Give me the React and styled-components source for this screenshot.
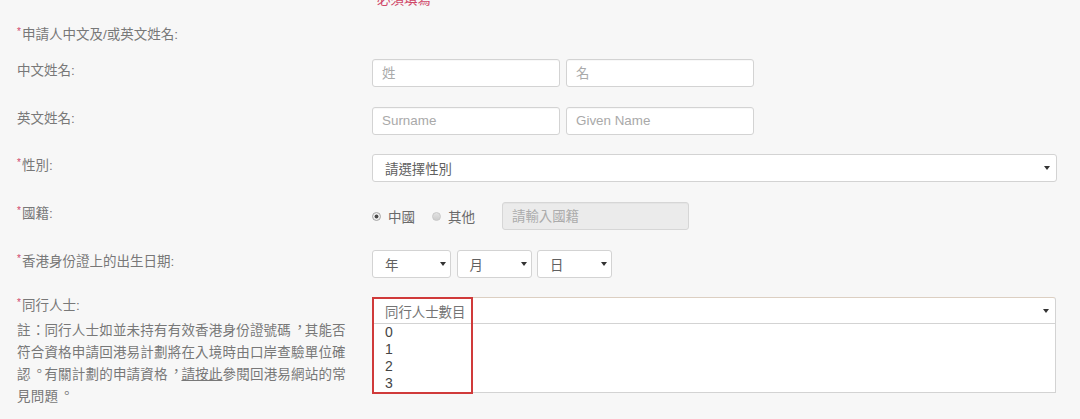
import React from 'react';
import styled, { createGlobalStyle } from 'styled-components';

const FONT = '"Liberation Sans", "Noto Sans CJK TC", sans-serif';
const CJK = '"Noto Sans CJK TC", "Noto Sans CJK JP", sans-serif';

const Global = createGlobalStyle`
  html, body { margin: 0; padding: 0; background: #f7f7f7; }
  body { font-family: ${FONT}; overflow: hidden; }
  * { box-sizing: border-box; }
`;

const Page = styled.div`
  width: 1080px;
  height: 419px;
  overflow: hidden;
  background: #f7f7f7;
  padding-left: 17px;
`;

const Form = styled.div`
  margin-top: -10px;
  display: flex;
  flex-direction: column;
`;

const Row = styled.div`
  display: grid;
  grid-template-columns: 355px 685px;
  align-items: start;
  height: ${(p) => (p.$h ? `${p.$h}px` : 'auto')};
`;

const Label = styled.div`
  font-size: 13.5px;
  line-height: 20px;
  color: #787878;
  padding-top: ${(p) => p.$pt ?? 2}px;
  margin-top: ${(p) => p.$mt ?? 0}px;
`;

const Req = styled.span`
  color: #d0456a;
  font-size: 10px;
  line-height: 14px;
  vertical-align: top;
  margin-right: 1px;
`;

const RequiredNote = styled.div`
  font-size: 13.5px;
  line-height: 20px;
  color: #cf4668;
`;

const Pair = styled.div`
  display: flex;
  gap: 6px;
`;

const TextInput = styled.input`
  width: ${(p) => p.$w ?? 188}px;
  height: 28px;
  border: 1px solid #d3d3d3;
  border-radius: 3px;
  background: #fff;
  padding: 0 9px;
  font: 13.4px ${FONT};
  color: #555;
  outline: none;
  box-shadow: inset 0 1px 1px rgba(0, 0, 0, 0.03);
  &::placeholder {
    color: #a9a9a9;
  }
  &:disabled {
    background: #ebebeb;
    border-color: #d6d6d6;
  }
  &:disabled::placeholder {
    color: #ababab;
  }
`;

const Select = styled.div`
  width: ${(p) => p.$w}px;
  height: 28px;
  border: 1px solid #d3d3d3;
  border-radius: 3px;
  background: #fff;
  display: flex;
  align-items: center;
  justify-content: space-between;
  padding: 0 ${(p) => p.$pr ?? 6}px 0 12px;
  font-size: 13.4px;
  color: #606060;
`;

const Arrow = () => (
  <svg width="6" height="4" viewBox="0 0 6 4" aria-hidden="true">
    <path d="M0 0H6L3 4Z" fill="#333" />
  </svg>
);

const DateGroup = styled.div`
  display: flex;
  gap: 5.5px;
`;

const RadioGroup = styled.div`
  display: flex;
  align-items: center;
  height: 28px;
`;

const RadioItem = styled.label`
  display: flex;
  align-items: center;
  gap: 7px;
  font-size: 13.5px;
  color: #6a6a6a;
  margin-right: ${(p) => p.$mr}px;
`;

const RadioDot = styled.span`
  width: 9px;
  height: 9px;
  border-radius: 50%;
  border: 1px solid ${(p) => (p.$checked ? '#a5a5a5' : '#c8c8c8')};
  background: ${(p) =>
    p.$checked
      ? 'radial-gradient(circle, #4a4a4a 0 1.6px, #efefef 2.3px)'
      : 'linear-gradient(#e2e2e2, #cdcdcd)'};
`;

const Combo = styled.div`
  position: relative;
  width: 684px;
`;

const ComboHead = styled.div`
  height: 27px;
  border: 1px solid #d3d3d3;
  border-top-color: #dccfc2;
  border-radius: 3px 3px 0 0;
  background: #fff;
  display: flex;
  align-items: center;
  justify-content: space-between;
  padding: 0 6px 0 12px;
  font-size: 13.4px;
  color: #747474;
`;

const ComboList = styled.ul`
  list-style: none;
  margin: 0;
  padding: 0;
  border: 1px solid #d3d3d3;
  border-top: none;
  background: #fff;
`;

const Option = styled.li`
  height: 16.8px;
  line-height: 16.8px;
  padding-left: 12px;
  font-size: 14px;
  color: #444;
`;

const Highlight = styled.div`
  position: absolute;
  left: 0;
  top: 0;
  width: 101px;
  height: 96.5px;
  border: 2px solid #d03a3a;
  pointer-events: none;
`;

const LeftCol = styled.div`
  display: flex;
  flex-direction: column;
`;

const Note = styled.p`
  margin: 1.5px 0 0;
  width: 336px;
  font-family: ${CJK};
  font-size: 13.5px;
  letter-spacing: 0.2px;
  line-height: 22px;
  color: #787878;
`;

/* Traditional-Chinese style punctuation: centred in its cell */
const Punct = styled.span`
  display: inline-block;
  transform: translate(${(p) => p.$dx ?? 0.14}em, ${(p) => p.$dy ?? -0.22}em);
`;

const NoteLink = styled.a`
  color: inherit;
  text-decoration: underline;
`;

export default function App() {
  return (
    <>
      <Global />
      <Page lang="zh-Hant-TW">
        <Form>
          <Row $h={35}>
            <div />
            <RequiredNote>
              <Req>*</Req>必須填寫
            </RequiredNote>
          </Row>
          <Row $h={34}>
            <Label $pt={0}>
              <Req>*</Req>申請人中文及/或英文姓名:
            </Label>
          </Row>
          <Row $h={47.7}>
            <Label>中文姓名:</Label>
            <Pair>
              <TextInput placeholder="姓" readOnly />
              <TextInput placeholder="名" readOnly />
            </Pair>
          </Row>
          <Row $h={47.7}>
            <Label>英文姓名:</Label>
            <Pair>
              <TextInput placeholder="Surname" readOnly />
              <TextInput placeholder="Given Name" readOnly />
            </Pair>
          </Row>
          <Row $h={47.7}>
            <Label>
              <Req>*</Req>性別:
            </Label>
            <Select $w={685}>
              <span>請選擇性別</span>
              <Arrow />
            </Select>
          </Row>
          <Row $h={47.7}>
            <Label>
              <Req>*</Req>國籍:
            </Label>
            <RadioGroup>
              <RadioItem $mr={17}>
                <RadioDot $checked />
                中國
              </RadioItem>
              <RadioItem $mr={27}>
                <RadioDot />
                其他
              </RadioItem>
              <TextInput $w={187} placeholder="請輸入國籍" disabled />
            </RadioGroup>
          </Row>
          <Row $h={47.7}>
            <Label>
              <Req>*</Req>香港身份證上的出生日期:
            </Label>
            <DateGroup>
              <Select $w={79} $pr={4}>
                <span>年</span>
                <Arrow />
              </Select>
              <Select $w={75} $pr={4}>
                <span>月</span>
                <Arrow />
              </Select>
              <Select $w={75} $pr={4}>
                <span>日</span>
                <Arrow />
              </Select>
            </DateGroup>
          </Row>
          <Row>
            <LeftCol>
              <Label $pt={0} $mt={-1}>
                <Req>*</Req>同行人士:
              </Label>
              <Note>
                註<Punct $dx={0.05} $dy={0}>：</Punct>同行人士如並未持有有效香港身份證號碼<Punct>，</Punct>其能否符合資格申請回港易計劃將在入境時由口岸查驗單位確認<Punct $dy={-0.2}>。</Punct>有關計劃的申請資格<Punct>，</Punct>
                <NoteLink href="#">請按此</NoteLink>參閱回港易網站的常見問題<Punct $dy={-0.2}>。</Punct>
              </Note>
            </LeftCol>
            <Combo>
              <ComboHead>
                <span>同行人士數目</span>
                <Arrow />
              </ComboHead>
              <ComboList>
                <Option>0</Option>
                <Option>1</Option>
                <Option>2</Option>
                <Option>3</Option>
              </ComboList>
              <Highlight />
            </Combo>
          </Row>
        </Form>
      </Page>
    </>
  );
}
